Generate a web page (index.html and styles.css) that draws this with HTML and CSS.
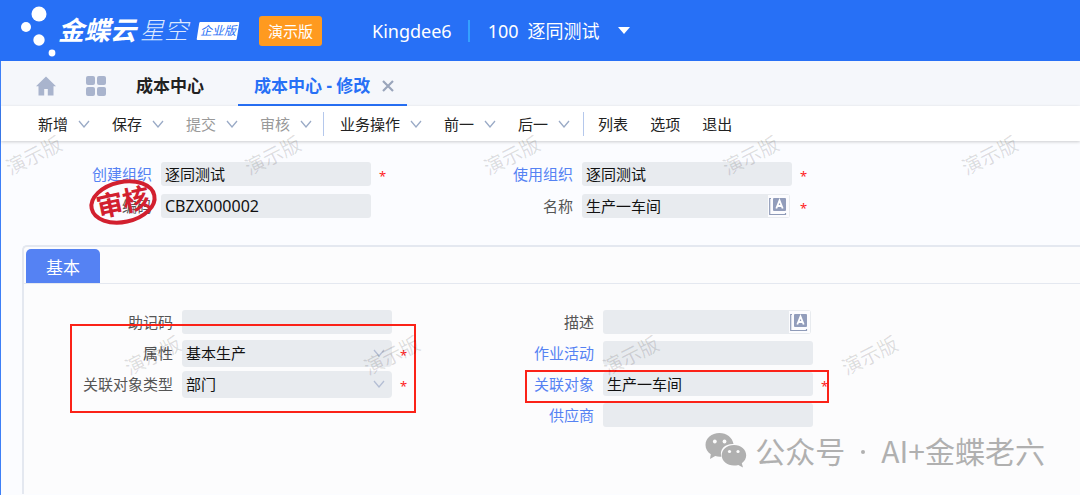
FILE: index.html
```html
<!DOCTYPE html>
<html lang="zh-CN">
<head>
<meta charset="utf-8">
<title>成本中心 - 修改</title>
<link rel="stylesheet" href="styles.css">
</head>
<body>
<svg class="defs" width="0" height="0" aria-hidden="true">
  <symbol id="chevron" viewBox="0 0 12 8"><path d="M1 1l5 6 5-6" fill="none" stroke="currentColor" stroke-width="1.3"/></symbol>
  <symbol id="lang" viewBox="0 0 21 22">
    <rect width="21" height="22" fill="#fcfcfe"/>
    <path d="M3 3.500H1.700V19.500H17.500V18" fill="none" stroke="#8f9bb8" stroke-width="1.200"/>
    <rect x="5" y="3" width="13" height="13" rx="1" fill="#929dbb"/>
    <path d="M8.300 13.500L11.500 5.500L14.700 13.500M9.500 11H13.500" fill="none" stroke="#fff" stroke-width="1.800"/>
  </symbol>
</svg>
<header class="header">
  <svg class="logo-dots" viewBox="0 0 38 54" width="38" height="54" aria-hidden="true">
    <g fill="#fff"><circle cx="19" cy="10" r="7.500"/><circle cx="6" cy="23" r="5"/><circle cx="19" cy="36" r="5.700"/><circle cx="32" cy="49" r="3.400"/></g>
  </svg>
  <div class="brand"><b>金蝶云</b><span>星空</span></div>
  <span class="edition">企业版</span>
  <span class="demo-tag">演示版</span>
  <span class="user">Kingdee6</span>
  <button class="org" type="button"><span>100</span><span>逐同测试</span>
    <svg width="12" height="8" viewBox="0 0 12 8" aria-hidden="true"><path d="M0 0h12L6 7z" fill="#fff"/></svg>
  </button>
</header>
<div class="workspace">
  <nav class="tabs">
    <button class="icon-tab" type="button" aria-label="首页"><svg width="20" height="20" viewBox="0 0 20 20"><path d="M10 .5L20 10.300H17.500V19.500H11.800V13H8.200V19.500H2.500V10.300H0z" fill="#a9b4cd"/></svg></button>
    <button class="icon-tab" type="button" aria-label="应用"><svg width="20" height="20" viewBox="0 0 20 20"><g fill="#a9b4cd"><rect width="9" height="9" rx="2"/><rect x="11" width="9" height="9" rx="2"/><rect y="11" width="9" height="9" rx="2"/><rect x="11" y="11" width="9" height="9" rx="2"/></g></svg></button>
    <a class="tab" href="#list">成本中心</a>
    <div class="tab tab-active"><a href="#edit">成本中心 - 修改</a>
      <button type="button" aria-label="关闭"><svg width="12" height="12" viewBox="0 0 12 12"><path d="M1 1l10 10M11 1L1 11" stroke="#9aa5bb" stroke-width="2.200"/></svg></button>
    </div>
  </nav>
  <div class="toolbar">
    <div class="group">
      <button type="button">新增<svg><use href="#chevron"/></svg></button>
      <button type="button">保存<svg><use href="#chevron"/></svg></button>
      <button type="button" disabled>提交<svg><use href="#chevron"/></svg></button>
      <button type="button" disabled>审核<svg><use href="#chevron"/></svg></button>
    </div>
    <div class="group">
      <button type="button">业务操作<svg><use href="#chevron"/></svg></button>
      <button type="button">前一<svg><use href="#chevron"/></svg></button>
      <button type="button">后一<svg><use href="#chevron"/></svg></button>
    </div>
    <div class="group">
      <button type="button">列表</button>
      <button type="button">选项</button>
      <button type="button">退出</button>
    </div>
  </div>
  <main>
    <section class="form head-form">
      <div class="col">
        <div class="row"><label class="link" for="create-org">创建组织</label><span class="field"><input id="create-org" value="逐同测试" readonly></span><i>*</i></div>
        <div class="row"><label for="code">编码</label><span class="field"><input class="code" id="code" value="CBZX000002" readonly></span>
          <svg class="stamp" width="72" height="52" viewBox="0 0 72 52" aria-label="审核">
            <g transform="rotate(-12 36 26)">
              <ellipse cx="36" cy="26" rx="32" ry="20" fill="none" stroke="#d2202f" stroke-width="4"/>
              <text x="36" y="36" text-anchor="middle" class="stamp-text">审核</text>
            </g>
          </svg>
        </div>
      </div>
      <div class="col">
        <div class="row"><label class="link" for="use-org">使用组织</label><span class="field"><input id="use-org" value="逐同测试" readonly></span><i>*</i></div>
        <div class="row"><label for="name">名称</label><span class="field multi"><input id="name" value="生产一车间" readonly><svg class="lang"><use href="#lang"/></svg></span><i>*</i></div>
      </div>
    </section>
    <section class="panel">
      <div class="panel-tabs"><button type="button">基本</button></div>
      <div class="form panel-form">
        <div class="col">
          <div class="row"><label for="memo">助记码</label><span class="field"><input id="memo" readonly></span></div>
          <div class="row"><label for="attr">属性</label><span class="field"><select id="attr"><option>基本生产</option></select><svg class="arrow"><use href="#chevron"/></svg></span><i>*</i></div>
          <div class="row"><label for="kind">关联对象类型</label><span class="field"><select id="kind"><option>部门</option></select><svg class="arrow"><use href="#chevron"/></svg></span><i>*</i></div>
        </div>
        <div class="col">
          <div class="row"><label for="desc">描述</label><span class="field multi"><input id="desc" readonly><svg class="lang"><use href="#lang"/></svg></span></div>
          <div class="row"><label class="link" for="activity">作业活动</label><span class="field"><input id="activity" readonly></span></div>
          <div class="row"><label class="link" for="object">关联对象</label><span class="field"><input id="object" value="生产一车间" readonly></span><i>*</i></div>
          <div class="row"><label class="link" for="vendor">供应商</label><span class="field"><input id="vendor" readonly></span></div>
        </div>
        <div class="mark mark-kind"></div>
        <div class="mark mark-object"></div>
      </div>
    </section>
  </main>
</div>
<div class="watermarks" aria-hidden="true">
  <div><span>演示版</span><span>演示版</span><span>演示版</span><span>演示版</span><span>演示版</span></div>
  <div class="shifted"><span>演示版</span><span>演示版</span><span>演示版</span><span>演示版</span></div>
</div>
<div class="signature">
  <svg width="42" height="36" viewBox="0 0 42 36" aria-hidden="true">
    <path d="M14.500 1C6.500 1 .5 6.300.5 13c0 3.800 2 7 5.300 9.300L5 27l5.200-3c1.900.6 4 .9 6.200.7C14 17 20.500 11.500 28.500 12 27.500 5.500 21.500 1 14.500 1z" fill="#b0b0b0"/>
    <path d="M29 13c-7 0-12.300 4.600-12.300 10.300S22 33.500 29 33.500c1.500 0 3-.2 4.300-.6L38 35.500l-1.200-4.200c2.800-2 4.400-4.800 4.400-8C41.200 17.600 36 13 29 13z" fill="#b0b0b0"/>
    <g fill="#fcfcfc"><circle cx="9.800" cy="9.500" r="1.900"/><circle cx="19.500" cy="9.500" r="1.900"/><circle cx="24.500" cy="19.500" r="1.600"/><circle cx="33" cy="19.500" r="1.600"/></g>
  </svg>
  <span>公众号</span><span class="dot"></span><span>AI+金蝶老六</span>
</div>
</body>
</html>
```
FILE: styles.css
```css
* { box-sizing: border-box; }
body {
  margin: 0;
  min-height: 100vh;
  display: flex;
  flex-direction: column;
  position: relative;
  background: #fbfcff;
  color: #222;
  font: 15px/24px "Noto Sans", "Noto Sans CJK SC", sans-serif;
}
button, input, select { font: inherit; color: inherit; border: 0; margin: 0; padding: 0; background: none; }
a { color: inherit; text-decoration: none; }
svg { display: block; flex: none; }
.defs { position: absolute; }

.header {
  height: 61px;
  display: flex;
  align-items: center;
  padding-left: 20px;
  background: #2770f6;
  color: #fff;
  white-space: nowrap;
}
.brand { display: flex; align-items: center; gap: 4px; font-style: italic; line-height: 28px; padding-bottom: 3px; font-family: "Noto Sans CJK SC", sans-serif; }
.brand b { font-size: 26px; font-weight: 700; }
.brand span { font-size: 24px; font-weight: 300; color: #dce8ff; }
.edition {
  position: relative;
  z-index: 0;
  margin-left: 9px;
  width: 42px;
  line-height: 18px;
  font-size: 12px;
  font-style: italic;
  text-align: center;
  color: #2770f6;
}
.edition::before { content: ""; position: absolute; z-index: -1; inset: 0 1px; background: #fff; transform: skewX(-9deg); border-radius: 1px; }
.demo-tag { margin-left: 20px; width: 63px; line-height: 30px; border-radius: 3px; background: #ff9a1f; text-align: center; font-size: 15px; }
.user { margin-left: 50px; padding-top: 1px; font-size: 18px; }
.org { display: flex; align-items: center; gap: 9px; margin-left: 16px; padding: 1px 0 0 18px; border-left: 2px solid #34a0ff; line-height: 21px; font-size: 18px; }
.org svg { margin-left: 9px; }

.workspace { flex: 1; display: flex; flex-direction: column; border-left: 1px solid #3d7ff7; }
.tabs { display: flex; align-items: center; height: 45px; padding-left: 35px; background: #f5f7fb; font-size: 17px; font-weight: 700; }
.icon-tab { margin-right: 30px; padding-top: 5px; }
.tab { line-height: 41px; padding-top: 4px; }
.tab-active { display: flex; align-items: center; gap: 12px; margin-left: 34px; padding: 4px 13px 0 16px; color: #2770f6; box-shadow: inset 0 -2px #2770f6; }
.toolbar { display: flex; align-items: center; height: 35px; padding-left: 37px; background: #fff; box-shadow: 0 1px 3px #00000030; }
.group { display: flex; align-items: center; gap: 22px; height: 24px; }
.group + .group { margin-left: 11px; padding-left: 16px; border-left: 1px solid #b5c8ec; }
.group + .group:last-child { margin-left: 13px; padding-left: 14px; }
.group button { display: flex; align-items: center; gap: 10px; }
.group button:disabled { color: #999; }
.group svg { width: 12px; height: 8px; color: #9aaac6; }

.form { display: flex; position: relative; }
.head-form { padding-top: 21px; }
.col { width: 421px; display: flex; flex-direction: column; gap: 8px; }
.row { display: flex; align-items: center; height: 24px; position: relative; }
.row label { width: 151px; margin-right: 9px; text-align: right; color: #555; }
.row .link { color: #5582f3; }
.row i { margin-left: 8px; font-size: 13px; font-style: normal; color: #f22; line-height: 16px; padding-top: 4px; }
.field { width: 210px; position: relative; display: flex; align-items: center; }
.field input, .field select { width: 100%; height: 24px; padding: 0 4px; border-radius: 3px; background: #e8ebef; appearance: none; outline: 0; color: #111; }
.field .code { font-size: 16px; }
.field select { height: 27px; border-radius: 4px; }
.field.multi { padding-right: 2px; }
.lang { position: absolute; right: 3px; width: 21px; height: 22px; }
.arrow { position: absolute; right: 7px; width: 12px; height: 8px; color: #b4bed4; }
.stamp { position: absolute; left: 86px; bottom: -10px; }
.stamp-text { font: 700 27px "Noto Sans CJK SC", sans-serif; fill: #d2202f; }

.panel { margin: 27px 0 0 21px; min-height: 249px; border: 1px solid #e4e8f0; border-width: 2px 0 0 2px; border-radius: 5px 0 0 0; background: #fcfcfd; }
.panel-tabs { padding: 2px 0 0 2px; border-bottom: 1px solid #e4e8f0; }
.panel-tabs button { display: block; width: 74px; height: 34px; padding-top: 4px; border-radius: 5px 5px 0 0; background: #5582f3; color: #fff; font-size: 17px; }
.panel-form { padding-top: 26px; }
.panel-form .col { gap: 7px; }
.panel-form .row label { width: 149px; }
.mark { position: absolute; border: 2px solid #fb2218; }
.mark-kind { left: 46px; top: 40px; width: 346px; height: 89px; }
.mark-object { left: 501px; top: 86px; width: 304px; height: 33px; }

.watermarks { position: absolute; inset: 144px 0 0 0; pointer-events: none; color: #00000021; font-size: 20px; }
.watermarks div { display: flex; gap: 179px; padding-left: 4px; height: 200px; }
.watermarks .shifted { padding-left: 123px; height: 24px; }
.watermarks span { flex: none; width: 60px; height: 24px; transform: rotate(-27deg); }
.signature { position: absolute; right: 35px; bottom: 25px; display: flex; align-items: center; color: #b0b0b0; font: 30px/40px "Noto Sans CJK SC", sans-serif; }
.signature svg { margin-right: 8px; }
.signature .dot { width: 4px; height: 4px; margin: 3px 16px 0; border-radius: 50%; background: currentColor; }
```
